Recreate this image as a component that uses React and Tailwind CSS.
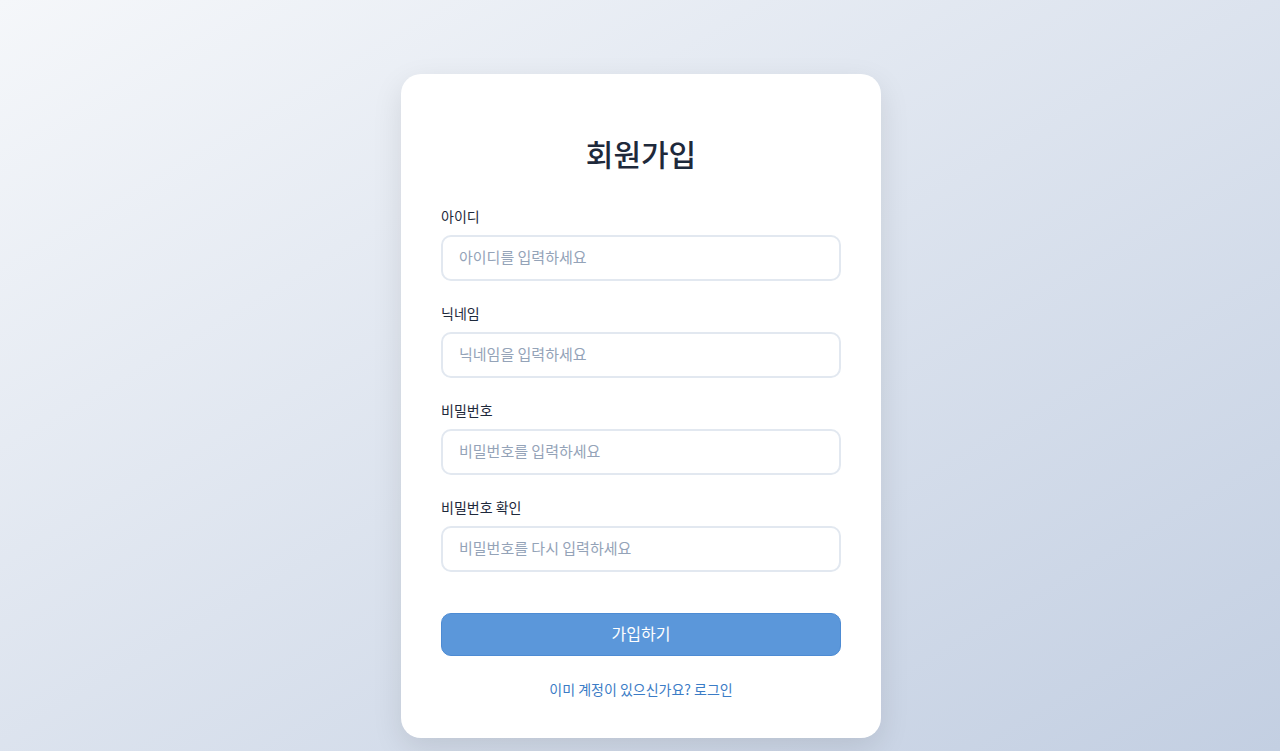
import { useState } from 'react';

const fields = [
    { id: 'username', label: '아이디', type: 'text', placeholder: '아이디를 입력하세요' },
    { id: 'nickname', label: '닉네임', type: 'text', placeholder: '닉네임을 입력하세요' },
    { id: 'password', label: '비밀번호', type: 'password', placeholder: '비밀번호를 입력하세요' },
    { id: 'passwordConfirm', label: '비밀번호 확인', type: 'password', placeholder: '비밀번호를 다시 입력하세요' },
];

const App = () => {
    const [form, setForm] = useState({ username: '', nickname: '', password: '', passwordConfirm: '' });

    const handleChange = (e) => {
        setForm({ ...form, [e.target.name]: e.target.value });
    };

    return (
        <div
            className="min-h-screen flex items-start justify-center pt-[74px] pl-[2px] bg-gradient-to-br from-[#f5f7fa] to-[#c3cfe2]"
            style={{ fontFamily: '"Noto Sans CJK KR", "Noto Sans", sans-serif' }}
        >
            <div className="w-[480px] bg-white rounded-[20px] shadow-[0_10px_30px_rgba(0,0,0,0.1)] px-10 pt-[62px] pb-[39px]">
                <h1 className="text-[30px] leading-[34px] font-medium text-center text-[#1e293b] mb-[36px]">
                    회원가입
                </h1>

                <form onSubmit={(e) => e.preventDefault()}>
                    {fields.map((field) => (
                        <div key={field.id} className="mb-[22px]">
                            <label htmlFor={field.id} className="block text-sm leading-[21px] text-[#1e293b] mb-2">
                                {field.label}
                            </label>
                            <input
                                id={field.id}
                                name={field.id}
                                type={field.type}
                                value={form[field.id]}
                                onChange={handleChange}
                                placeholder={field.placeholder}
                                className="w-full h-[46px] px-4 pb-1 rounded-[10px] border-2 border-[#e2e8f0] text-[15px] text-[#1e293b] placeholder:text-[#94a3b8] outline-none focus:border-[#5a97da]"
                            />
                        </div>
                    ))}

                    <button
                        type="submit"
                        className="w-full h-[43px] mt-[19px] pb-1 rounded-[10px] bg-[#5b97da] border border-[#4d8bd3] text-white text-base"
                    >
                        가입하기
                    </button>
                </form>

                <p className="mt-[23px] text-center text-sm leading-5">
                    <a href="#" className="text-[#3b7cc6]">이미 계정이 있으신가요? 로그인</a>
                </p>
            </div>
        </div>
    );
};

export default App;
